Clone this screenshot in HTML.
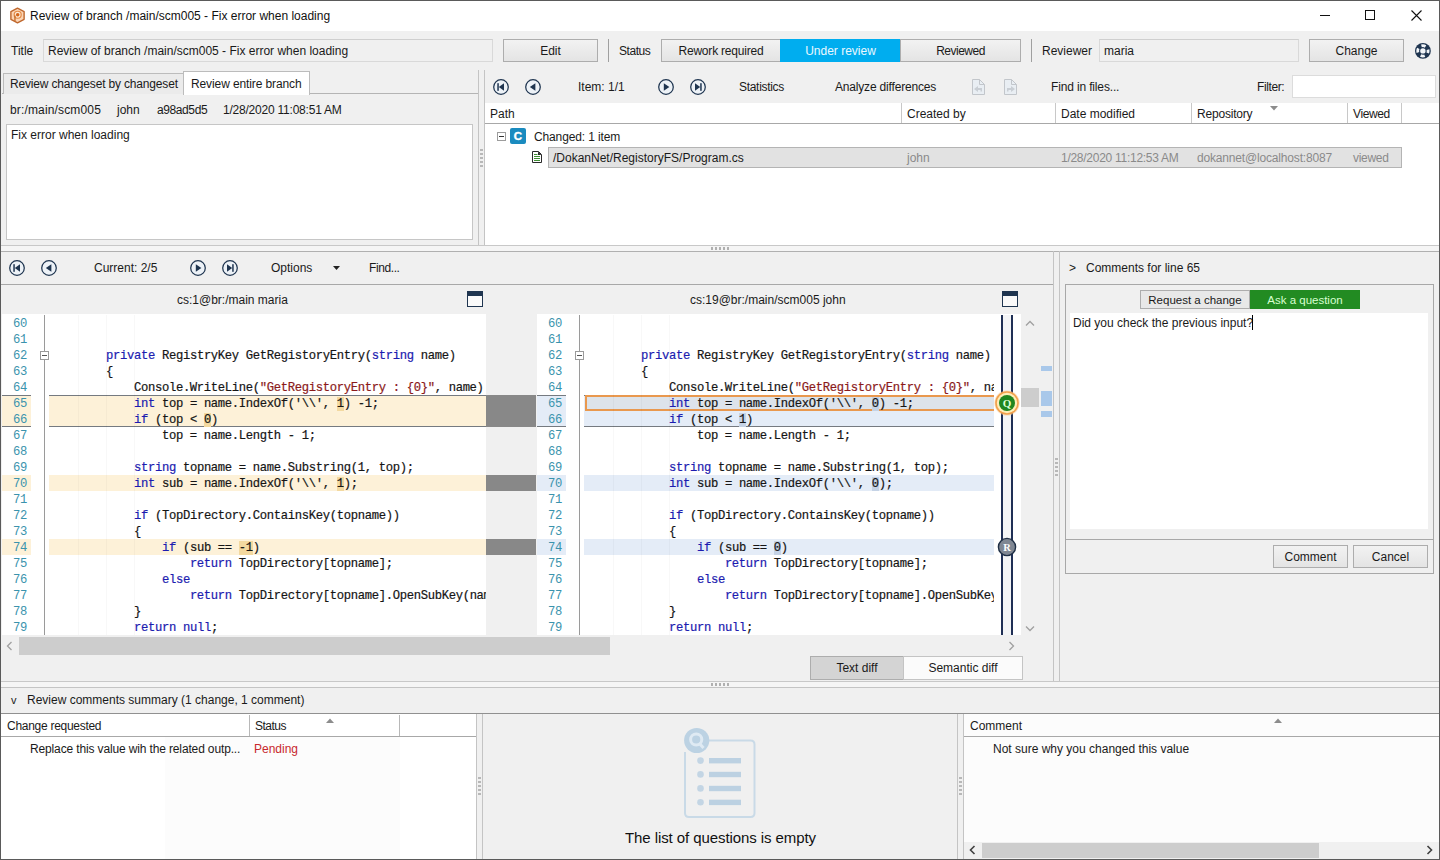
<!DOCTYPE html>
<html><head><meta charset="utf-8"><title>Review of branch /main/scm005 - Fix error when loading</title>
<style>
*{box-sizing:border-box;margin:0;padding:0}
html,body{width:1440px;height:860px;overflow:hidden;background:#f0f0f0}
body{font-family:"Liberation Sans",sans-serif;font-size:12px;color:#1a1a1a;position:relative}
.a{position:absolute}
.t{position:absolute;white-space:pre;line-height:16px;height:16px}
.btn{position:absolute;border:1px solid #adadad;background:linear-gradient(#f2f2f2,#e4e4e4);text-align:center;line-height:23px;white-space:pre}
.fld{position:absolute;border:1px solid #d9d9d9;border-top-color:#cfcfcf;background:#f0f0f0;line-height:22px;padding-left:4px;white-space:pre}
.hl{position:absolute;background:#a0a0a0;height:1px}
.vl{position:absolute;background:#a0a0a0;width:1px}
.mono{font-family:"Liberation Mono",monospace;font-size:11.67px}
.code{position:absolute;white-space:pre;font-family:"Liberation Mono",monospace;font-size:12.2px;letter-spacing:-0.32px;line-height:16px;margin-top:1px;color:#151515;-webkit-text-stroke:0.2px}
.h{background:#f3d9a0}#paner .h{background:#c5d3e6}.k{color:#1c1cb0}.s{color:#8b1a1a}
.ln{position:absolute;white-space:pre;font-family:"Liberation Mono",monospace;font-size:12.2px;letter-spacing:-0.32px;line-height:16px;margin-top:1px;margin-left:-1px;color:#3a93ad;text-align:right;width:26px}
</style></head><body>
<!-- title bar -->
<div class="a" style="left:0;top:0;width:1440px;height:31px;background:#fff"></div>
<div class="t" style="left:30px;top:8px;color:#111">Review of branch /main/scm005 - Fix error when loading</div>

<!-- app icon -->
<svg class="a" style="left:8.5px;top:6.5px" width="17" height="17" viewBox="0 0 18 18"><path d="M9 1.2 L16 5 V13 L9 16.8 L2 13 V5 Z" fill="#fbd5b5" stroke="#bf682e" stroke-width="1.5" stroke-linejoin="round"/><circle cx="9.2" cy="8.2" r="3.7" fill="#fdebd8" stroke="#e58a45" stroke-width="1.3"/><circle cx="9.2" cy="8.2" r="1.9" fill="#d4661a"/><path d="M6.3 9V15" stroke="#c8702f" stroke-width="1.5"/></svg>
<!-- window controls -->
<div class="a" style="left:1320px;top:15px;width:10px;height:1px;background:#111"></div>
<div class="a" style="left:1365px;top:10px;width:10px;height:10px;border:1px solid #111"></div>
<svg class="a" style="left:1411px;top:10px" width="11" height="11" viewBox="0 0 11 11"><path d="M0.5 0.5L10.5 10.5M10.5 0.5L0.5 10.5" stroke="#111" stroke-width="1.1" fill="none"/></svg>
<!-- top toolbar -->
<div class="t" style="left:11px;top:43px">Title</div>
<div class="fld" style="left:43px;top:39px;width:450px;height:23px">Review of branch /main/scm005 - Fix error when loading</div>
<div class="btn" style="left:503px;top:39px;width:95px;height:23px">Edit</div>
<div class="vl" style="left:608px;top:39px;height:23px"></div>
<div class="t" style="letter-spacing:-0.45px;left:619px;top:43px">Status</div>
<div class="btn" style="letter-spacing:-0.2px;left:661px;top:39px;width:120px;height:23px">Rework required</div>
<div class="btn" style="left:780px;top:39px;width:121px;height:23px;background:#00adef;border-color:#00adef;color:#eaf8ff">Under review</div>
<div class="btn" style="letter-spacing:-0.5px;left:900px;top:39px;width:121px;height:23px">Reviewed</div>
<div class="vl" style="left:1031px;top:39px;height:23px"></div>
<div class="t" style="left:1042px;top:43px">Reviewer</div>
<div class="fld" style="left:1099px;top:39px;width:200px;height:23px">maria</div>
<div class="btn" style="left:1309px;top:39px;width:95px;height:23px">Change</div>
<svg class="a" style="left:1414px;top:42px" width="18" height="18" viewBox="0 0 18 18"><circle cx="8.9" cy="8.9" r="7.9" fill="#1f3550"/><circle cx="8.9" cy="8.9" r="2.7" fill="#f2f5f9"/><circle cx="8.9" cy="8.9" r="5.2" fill="none" stroke="#f2f5f9" stroke-width="2.8" stroke-dasharray="4.3 3.868" stroke-dashoffset="2.15"/></svg>

<!-- left tabs -->
<div class="hl" style="left:2px;top:93px;width:476px;background:#b4b4b4"></div>
<div class="a" style="left:3px;top:73px;width:181px;height:21px;border:1px solid #bcbcbc;border-bottom:0;background:#ebebeb"></div>
<div class="t" style="letter-spacing:-0.17px;left:10px;top:76px">Review changeset by changeset</div>
<div class="a" style="left:183px;top:71px;width:127px;height:24px;border:1px solid #bcbcbc;border-bottom:0;background:#fff"></div>
<div class="t" style="letter-spacing:-0.11px;left:191px;top:76px">Review entire branch</div>
<div class="t" style="letter-spacing:0.15px;left:10px;top:102px">br:/main/scm005</div>
<div class="t" style="left:117px;top:102px">john</div>
<div class="t" style="letter-spacing:-0.4px;left:157px;top:102px">a98ad5d5</div>
<div class="t" style="letter-spacing:-0.22px;left:223px;top:102px">1/28/2020 11:08:51 AM</div>
<div class="a" style="left:6px;top:124px;width:467px;height:116px;border:1px solid #c6c6c6;background:#fff"></div>
<div class="t" style="left:11px;top:127px">Fix error when loading</div>
<!-- v splitter top -->
<div class="vl" style="left:478px;top:70px;height:175px;background:#c4c4c4"></div>
<div class="a" style="left:480px;top:149px;width:3px;height:18px;background:repeating-linear-gradient(#b8b8b8 0 2px,transparent 2px 4px)"></div>
<!-- right top panel -->
<div class="a" style="left:484px;top:70px;width:1px;height:175px;background:#c4c4c4"></div>
<div class="a" style="left:485px;top:103px;width:954px;height:142px;background:#fff"></div>
<svg class="a" style="left:492px;top:78px" width="216" height="18" viewBox="0 0 216 18" fill="none" stroke="#1f3550">
<g id="nfirst"><circle cx="9" cy="9" r="7.3" stroke-width="1.25" fill="#edf2f7"/><path d="M12 5.2V12.8L6.8 9Z" fill="#1f3550" stroke="none"/><rect x="5.3" y="5.2" width="1.5" height="7.6" fill="#1f3550" stroke="none"/></g>
<g transform="translate(32 0)"><circle cx="9" cy="9" r="7.3" stroke-width="1.25" fill="#edf2f7"/><path d="M11.4 5.2V12.8L5.8 9Z" fill="#1f3550" stroke="none"/></g>
<g transform="translate(165 0)"><circle cx="9" cy="9" r="7.3" stroke-width="1.25" fill="#edf2f7"/><path d="M6.8 5.2V12.8L12.4 9Z" fill="#1f3550" stroke="none"/></g>
<g transform="translate(197 0)"><circle cx="9" cy="9" r="7.3" stroke-width="1.25" fill="#edf2f7"/><path d="M6 5.2V12.8L11.2 9Z" fill="#1f3550" stroke="none"/><rect x="11.2" y="5.2" width="1.5" height="7.6" fill="#1f3550" stroke="none"/></g>
</svg>
<div class="t" style="left:578px;top:79px">Item: 1/1</div>
<div class="t" style="letter-spacing:-0.3px;left:739px;top:79px">Statistics</div>
<div class="t" style="letter-spacing:-0.18px;left:835px;top:79px">Analyze differences</div>
<svg class="a" style="left:969px;top:78px" width="52" height="18" viewBox="0 0 52 18" fill="#e9eef3" stroke="#c2c6cb" stroke-width="1"><path d="M3.5 1.5H10.5L15.5 6.5V16.5H3.5Z"/><path d="M10.5 1.5V6.5H15.5" fill="none"/><path d="M5 11L9 8V10H13V13.5H11.5V12H9V14Z" fill="#c9ced4" stroke="none"/>
<g transform="translate(32 0)"><path d="M3.5 1.5H10.5L15.5 6.5V16.5H3.5Z"/><path d="M10.5 1.5V6.5H15.5" fill="none"/><path d="M14 11L10 8V10H6V13.5H7.5V12H10V14Z" fill="#c9ced4" stroke="none"/></g></svg>
<div class="t" style="letter-spacing:-0.15px;left:1051px;top:79px">Find in files...</div>
<div class="t" style="letter-spacing:-0.4px;left:1257px;top:79px">Filter:</div>
<div class="a" style="left:1292px;top:75px;width:144px;height:23px;border:1px solid #dcdcdc;background:#fff"></div>
<!-- header -->
<div class="hl" style="left:485px;top:123px;width:954px;background:#a8a8a8"></div>
<div class="t" style="left:490px;top:106px">Path</div>
<div class="vl" style="left:901px;top:103px;height:20px;background:#c8c8c8"></div>
<div class="t" style="left:907px;top:106px">Created by</div>
<div class="vl" style="left:1055px;top:103px;height:20px;background:#c8c8c8"></div>
<div class="t" style="left:1061px;top:106px">Date modified</div>
<div class="vl" style="left:1191px;top:103px;height:20px;background:#c8c8c8"></div>
<div class="t" style="letter-spacing:-0.2px;left:1197px;top:106px">Repository</div>
<svg class="a" style="left:1270px;top:106px" width="8" height="5"><path d="M0 0H8L4 4.5Z" fill="#8c8c8c"/></svg>
<div class="vl" style="left:1347px;top:103px;height:20px;background:#c8c8c8"></div>
<div class="t" style="letter-spacing:-0.4px;left:1353px;top:106px">Viewed</div>
<div class="vl" style="left:1401px;top:103px;height:20px;background:#c8c8c8"></div>
<!-- tree -->
<div class="a" style="left:497px;top:132px;width:9px;height:9px;border:1px solid #9c9c9c;background:#fff"></div>
<div class="a" style="left:499px;top:136px;width:5px;height:1px;background:#333"></div>
<div class="a" style="left:510px;top:128px;width:16px;height:16px;border-radius:2px;background:#1a8bbf;color:#fff;font-weight:bold;font-size:11.5px;line-height:16px;text-align:center;-webkit-text-stroke:0.4px #fff">C</div>
<div class="t" style="letter-spacing:-0.13px;left:534px;top:129px">Changed: 1 item</div>
<svg class="a" style="left:532px;top:151px" width="10" height="12" viewBox="0 0 10 12"><path d="M0.5 0.5H6.5L9.5 3.5V11.5H0.5Z" fill="#fff" stroke="#2a2a2a" stroke-width="1"/><path d="M6 0.5L9.5 4H6Z" fill="#2a2a2a"/><path d="M2 3.5H5.5M2 5.5H8M2 7.5H8M2 9.5H8" stroke="#3f8f35" stroke-width="1"/></svg>
<div class="a" style="left:548px;top:147px;width:854px;height:21px;border:1px solid #b4b4b4;background:#e2e2e2"></div>
<div class="t" style="left:553px;top:150px">/DokanNet/RegistoryFS/Program.cs</div>
<div class="t" style="left:907px;top:150px;color:#8a8a8a">john</div>
<div class="t" style="letter-spacing:-0.27px;left:1061px;top:150px;color:#8a8a8a">1/28/2020 11:12:53 AM</div>
<div class="t" style="letter-spacing:-0.17px;left:1197px;top:150px;color:#8a8a8a">dokannet@localhost:8087</div>
<div class="t" style="letter-spacing:-0.3px;left:1353px;top:150px;color:#8a8a8a">viewed</div>
<!-- h splitter 1 -->
<div class="hl" style="left:1px;top:245px;width:1438px;background:#c8c8c8"></div>

<div class="a" style="left:1px;top:246px;width:1438px;height:5px;background:#f5f5f5"></div><div class="hl" style="left:1px;top:251px;width:1438px;background:#b0b0b0"></div><div class="a" style="left:711px;top:247px;width:18px;height:3px;background:repeating-linear-gradient(90deg,#b0b0b0 0 2px,transparent 2px 4px)"></div>
<!-- diff toolbar -->
<svg class="a" style="left:8px;top:259px" width="232" height="18" viewBox="0 0 232 18" fill="none" stroke="#1f3550">
<g><circle cx="9" cy="9" r="7.3" stroke-width="1.25" fill="#edf2f7"/><path d="M12 5.2V12.8L6.8 9Z" fill="#1f3550" stroke="none"/><rect x="5.3" y="5.2" width="1.5" height="7.6" fill="#1f3550" stroke="none"/></g>
<g transform="translate(32 0)"><circle cx="9" cy="9" r="7.3" stroke-width="1.25" fill="#edf2f7"/><path d="M11.4 5.2V12.8L5.8 9Z" fill="#1f3550" stroke="none"/></g>
<g transform="translate(181 0)"><circle cx="9" cy="9" r="7.3" stroke-width="1.25" fill="#edf2f7"/><path d="M6.8 5.2V12.8L12.4 9Z" fill="#1f3550" stroke="none"/></g>
<g transform="translate(213 0)"><circle cx="9" cy="9" r="7.3" stroke-width="1.25" fill="#edf2f7"/><path d="M6 5.2V12.8L11.2 9Z" fill="#1f3550" stroke="none"/><rect x="11.2" y="5.2" width="1.5" height="7.6" fill="#1f3550" stroke="none"/></g>
</svg>
<div class="t" style="left:94px;top:260px">Current: 2/5</div>
<div class="t" style="left:271px;top:260px">Options</div>
<svg class="a" style="left:332.5px;top:265.5px" width="7" height="4"><path d="M0 0H7L3.5 4Z" fill="#222"/></svg>
<div class="t" style="letter-spacing:-0.4px;left:369px;top:260px">Find...</div>
<div class="hl" style="left:1px;top:284px;width:1052px;background:#a8a8a8"></div>
<div class="t" style="left:177px;top:292px">cs:1@br:/main maria</div>
<div class="t" style="left:690px;top:292px">cs:19@br:/main/scm005 john</div>
<div class="a" style="left:467px;top:291px;width:16px;height:16px;border:1px solid #1f3550;border-top:5px solid #1f3550;background:#fafafa"></div>
<div class="a" style="left:1002px;top:291px;width:16px;height:16px;border:1px solid #1f3550;border-top:5px solid #1f3550;background:#fafafa"></div>
<div class="a" id="panel" style="left:2px;top:315px;width:484px;height:320px;background:#fff;overflow:hidden">
<div class="a" style="left:0;top:80px;width:29px;height:32px;background:#fdf1d8"></div>
<div class="a" style="left:47px;top:80px;width:437px;height:32px;background:#fdf1d8"></div>
<div class="a" style="left:0;top:80px;width:29px;height:1px;background:#757a80"></div>
<div class="a" style="left:47px;top:80px;width:437px;height:1px;background:#757a80"></div>
<div class="a" style="left:0;top:111px;width:29px;height:1px;background:#757a80"></div>
<div class="a" style="left:47px;top:111px;width:437px;height:1px;background:#757a80"></div>
<div class="a" style="left:0;top:160px;width:29px;height:16px;background:#fdf1d8"></div>
<div class="a" style="left:47px;top:160px;width:437px;height:16px;background:#fdf1d8"></div>
<div class="a" style="left:0;top:224px;width:29px;height:16px;background:#fdf1d8"></div>
<div class="a" style="left:47px;top:224px;width:437px;height:16px;background:#fdf1d8"></div>
<div class="a" style="left:76px;top:0;width:1px;height:320px;background:rgba(0,0,0,0.028)"></div>
<div class="a" style="left:104px;top:0;width:1px;height:320px;background:rgba(0,0,0,0.028)"></div>
<div class="a" style="left:132px;top:0;width:1px;height:320px;background:rgba(0,0,0,0.028)"></div>
<div class="a" style="left:42px;top:0;width:1px;height:320px;background:#9a9a9a"></div>
<div class="a" style="left:38px;top:36px;width:9px;height:9px;border:1px solid #9a9a9a;background:#fff"></div><div class="a" style="left:40px;top:40px;width:5px;height:1px;background:#555"></div>
<div class="ln" style="left:0;top:0px">60</div>
<div class="ln" style="left:0;top:16px">61</div>
<div class="ln" style="left:0;top:32px">62</div>
<div class="code" style="left:48px;top:32px">        <span class="k">private</span> RegistryKey GetRegistoryEntry(<span class="k">string</span> name)</div>
<div class="ln" style="left:0;top:48px">63</div>
<div class="code" style="left:48px;top:48px">        {</div>
<div class="ln" style="left:0;top:64px">64</div>
<div class="code" style="left:48px;top:64px">            Console.WriteLine(<span class="s">"GetRegistoryEntry : {0}"</span>, name)</div>
<div class="ln" style="left:0;top:80px">65</div>
<div class="code" style="left:48px;top:80px">            <span class="k">int</span> top = name.IndexOf('\\', <span class="h">1</span>) -1;</div>
<div class="ln" style="left:0;top:96px">66</div>
<div class="code" style="left:48px;top:96px">            <span class="k">if</span> (top &lt; <span class="h">0</span>)</div>
<div class="ln" style="left:0;top:112px">67</div>
<div class="code" style="left:48px;top:112px">                top = name.Length - 1;</div>
<div class="ln" style="left:0;top:128px">68</div>
<div class="ln" style="left:0;top:144px">69</div>
<div class="code" style="left:48px;top:144px">            <span class="k">string</span> topname = name.Substring(1, top);</div>
<div class="ln" style="left:0;top:160px">70</div>
<div class="code" style="left:48px;top:160px">            <span class="k">int</span> sub = name.IndexOf('\\', <span class="h">1</span>);</div>
<div class="ln" style="left:0;top:176px">71</div>
<div class="ln" style="left:0;top:192px">72</div>
<div class="code" style="left:48px;top:192px">            <span class="k">if</span> (TopDirectory.ContainsKey(topname))</div>
<div class="ln" style="left:0;top:208px">73</div>
<div class="code" style="left:48px;top:208px">            {</div>
<div class="ln" style="left:0;top:224px">74</div>
<div class="code" style="left:48px;top:224px">                <span class="k">if</span> (sub == <span class="h">-1</span>)</div>
<div class="ln" style="left:0;top:240px">75</div>
<div class="code" style="left:48px;top:240px">                    <span class="k">return</span> TopDirectory[topname];</div>
<div class="ln" style="left:0;top:256px">76</div>
<div class="code" style="left:48px;top:256px">                <span class="k">else</span></div>
<div class="ln" style="left:0;top:272px">77</div>
<div class="code" style="left:48px;top:272px">                    <span class="k">return</span> TopDirectory[topname].OpenSubKey(name.Substring(sub + 1));</div>
<div class="ln" style="left:0;top:288px">78</div>
<div class="code" style="left:48px;top:288px">            }</div>
<div class="ln" style="left:0;top:304px">79</div>
<div class="code" style="left:48px;top:304px">            <span class="k">return</span> <span class="k">null</span>;</div>
</div>
<div class="a" style="left:486px;top:395px;width:50px;height:32px;background:#888"></div>
<div class="a" style="left:486px;top:475px;width:50px;height:16px;background:#888"></div>
<div class="a" style="left:486px;top:539px;width:50px;height:16px;background:#888"></div>
<div class="a" id="paner" style="left:537px;top:315px;width:457px;height:320px;background:#fff;overflow:hidden">
<div class="a" style="left:0;top:80px;width:29px;height:32px;background:#e4ecf7"></div>
<div class="a" style="left:47px;top:80px;width:410px;height:32px;background:#e4ecf7"></div>
<div class="a" style="left:0;top:80px;width:29px;height:1px;background:#757a80"></div>
<div class="a" style="left:47px;top:80px;width:410px;height:1px;background:#757a80"></div>
<div class="a" style="left:0;top:111px;width:29px;height:1px;background:#757a80"></div>
<div class="a" style="left:47px;top:111px;width:410px;height:1px;background:#757a80"></div>
<div class="a" style="left:0;top:160px;width:29px;height:16px;background:#e4ecf7"></div>
<div class="a" style="left:47px;top:160px;width:410px;height:16px;background:#e4ecf7"></div>
<div class="a" style="left:0;top:224px;width:29px;height:16px;background:#e4ecf7"></div>
<div class="a" style="left:47px;top:224px;width:410px;height:16px;background:#e4ecf7"></div>
<div class="a" style="left:48px;top:80px;width:409px;height:16px;background:#dde3ea;border:2px solid #e9984e;border-right:0"></div>
<div class="a" style="left:76px;top:0;width:1px;height:320px;background:rgba(0,0,0,0.028)"></div>
<div class="a" style="left:104px;top:0;width:1px;height:320px;background:rgba(0,0,0,0.028)"></div>
<div class="a" style="left:132px;top:0;width:1px;height:320px;background:rgba(0,0,0,0.028)"></div>
<div class="a" style="left:42px;top:0;width:1px;height:320px;background:#9a9a9a"></div>
<div class="a" style="left:38px;top:36px;width:9px;height:9px;border:1px solid #9a9a9a;background:#fff"></div><div class="a" style="left:40px;top:40px;width:5px;height:1px;background:#555"></div>
<div class="ln" style="left:0;top:0px">60</div>
<div class="ln" style="left:0;top:16px">61</div>
<div class="ln" style="left:0;top:32px">62</div>
<div class="code" style="left:48px;top:32px">        <span class="k">private</span> RegistryKey GetRegistoryEntry(<span class="k">string</span> name)</div>
<div class="ln" style="left:0;top:48px">63</div>
<div class="code" style="left:48px;top:48px">        {</div>
<div class="ln" style="left:0;top:64px">64</div>
<div class="code" style="left:48px;top:64px">            Console.WriteLine(<span class="s">"GetRegistoryEntry : {0}"</span>, name)</div>
<div class="ln" style="left:0;top:80px">65</div>
<div class="code" style="left:48px;top:80px">            <span class="k">int</span> top = name.IndexOf('\\', <span class="h">0</span>) -1;</div>
<div class="ln" style="left:0;top:96px">66</div>
<div class="code" style="left:48px;top:96px">            <span class="k">if</span> (top &lt; <span class="h">1</span>)</div>
<div class="ln" style="left:0;top:112px">67</div>
<div class="code" style="left:48px;top:112px">                top = name.Length - 1;</div>
<div class="ln" style="left:0;top:128px">68</div>
<div class="ln" style="left:0;top:144px">69</div>
<div class="code" style="left:48px;top:144px">            <span class="k">string</span> topname = name.Substring(1, top);</div>
<div class="ln" style="left:0;top:160px">70</div>
<div class="code" style="left:48px;top:160px">            <span class="k">int</span> sub = name.IndexOf('\\', <span class="h">0</span>);</div>
<div class="ln" style="left:0;top:176px">71</div>
<div class="ln" style="left:0;top:192px">72</div>
<div class="code" style="left:48px;top:192px">            <span class="k">if</span> (TopDirectory.ContainsKey(topname))</div>
<div class="ln" style="left:0;top:208px">73</div>
<div class="code" style="left:48px;top:208px">            {</div>
<div class="ln" style="left:0;top:224px">74</div>
<div class="code" style="left:48px;top:224px">                <span class="k">if</span> (sub == <span class="h">0</span>)</div>
<div class="ln" style="left:0;top:240px">75</div>
<div class="code" style="left:48px;top:240px">                    <span class="k">return</span> TopDirectory[topname];</div>
<div class="ln" style="left:0;top:256px">76</div>
<div class="code" style="left:48px;top:256px">                <span class="k">else</span></div>
<div class="ln" style="left:0;top:272px">77</div>
<div class="code" style="left:48px;top:272px">                    <span class="k">return</span> TopDirectory[topname].OpenSubKey(name.Substring(sub + 1));</div>
<div class="ln" style="left:0;top:288px">78</div>
<div class="code" style="left:48px;top:288px">            }</div>
<div class="ln" style="left:0;top:304px">79</div>
<div class="code" style="left:48px;top:304px">            <span class="k">return</span> <span class="k">null</span>;</div>
</div>
<div class="a" style="left:2px;top:314px;width:484px;height:1px;background:#fff"></div><div class="a" style="left:537px;top:314px;width:484px;height:1px;background:#fff"></div>
<!-- right gutter of diff -->
<div class="a" style="left:994px;top:315px;width:27px;height:320px;background:#fff"></div>
<div class="a" style="left:1001px;top:315px;width:12px;height:320px;background:#f3f4f6;border-left:2px solid #1f2f55;border-right:2px solid #1f2f55"></div>
<svg class="a" style="left:993px;top:389px" width="28" height="28" viewBox="0 0 28 28"><circle cx="14" cy="14" r="12.6" fill="#f6c48a" opacity="0.55"/><circle cx="14" cy="14" r="11.8" fill="#f2a04c"/><circle cx="14" cy="14" r="10.2" fill="#fdeeb8"/><circle cx="14" cy="14" r="8" fill="#1f861f"/><text x="14" y="18" text-anchor="middle" font-family="Liberation Serif,serif" font-weight="bold" font-size="11" fill="#dfffd8">Q</text></svg>
<svg class="a" style="left:997px;top:537px" width="20" height="20" viewBox="0 0 20 20"><circle cx="10" cy="10" r="8.6" fill="#7f8793" stroke="#1f2f45" stroke-width="1.4"/><text x="10" y="13.8" text-anchor="middle" font-family="Liberation Serif,serif" font-weight="bold" font-size="10.5" fill="#fff">R</text></svg>
<!-- v scrollbar -->
<svg class="a" style="left:1025px;top:320px" width="10" height="7"><path d="M1 5.5L5 1.5L9 5.5" fill="none" stroke="#a0a0a0" stroke-width="1.3"/></svg>
<svg class="a" style="left:1025px;top:625px" width="10" height="7"><path d="M1 1.5L5 5.5L9 1.5" fill="none" stroke="#a0a0a0" stroke-width="1.3"/></svg>
<div class="a" style="left:1021px;top:388px;width:18px;height:19px;background:#cdcdcd"></div>
<div class="a" style="left:1041px;top:366px;width:11px;height:5px;background:#a9c8ea"></div>
<div class="a" style="left:1041px;top:391px;width:11px;height:15px;background:#a9c8ea"></div>
<div class="a" style="left:1041px;top:411px;width:11px;height:6px;background:#a9c8ea"></div>
<!-- h scrollbar -->
<svg class="a" style="left:6px;top:641px" width="7" height="10"><path d="M5.5 1L1.5 5L5.5 9" fill="none" stroke="#a0a0a0" stroke-width="1.3"/></svg>
<svg class="a" style="left:1008px;top:641px" width="7" height="10"><path d="M1.5 1L5.5 5L1.5 9" fill="none" stroke="#a0a0a0" stroke-width="1.3"/></svg>
<div class="a" style="left:19px;top:637px;width:591px;height:18px;background:#cdcdcd"></div>
<div class="btn" style="left:810px;top:656px;width:94px;height:24px;background:#d4d4d4;line-height:22px">Text diff</div>
<div class="btn" style="left:903px;top:656px;width:120px;height:24px;background:#fbfbfb;border-color:#c4c4c4;line-height:22px">Semantic diff</div>
<!-- v splitter diff/comments -->
<div class="vl" style="left:1053px;top:251px;height:431px;background:#c4c4c4"></div>
<div class="vl" style="left:1059px;top:251px;height:431px;background:#c4c4c4"></div>
<div class="a" style="left:1055px;top:458px;width:3px;height:18px;background:repeating-linear-gradient(#b8b8b8 0 2px,transparent 2px 4px)"></div>
<!-- comments panel -->
<div class="t" style="left:1069px;top:260px">&gt;</div>
<div class="t" style="left:1086px;top:260px">Comments for line 65</div>
<div class="a" style="left:1065px;top:284px;width:369px;height:290px;border:1px solid #a8a8a8"></div>
<div class="btn" style="left:1140px;top:290px;width:110px;height:19px;line-height:18px;font-size:11.5px;background:#e8e8e8">Request a change</div>
<div class="btn" style="left:1250px;top:290px;width:110px;height:19px;line-height:18px;font-size:11.5px;background:#228b22;border-color:#228b22;color:#d8ffd0">Ask a question</div>
<div class="a" style="left:1070px;top:313px;width:358px;height:216px;background:#fff"></div>
<div class="t" style="left:1073px;top:315px">Did you check the previous input?</div>
<div class="a" style="left:1252px;top:315px;width:1px;height:15px;background:#000"></div>
<div class="hl" style="left:1066px;top:539px;width:367px;background:#a8a8a8"></div>
<div class="btn" style="left:1273px;top:545px;width:75px;height:23px">Comment</div>
<div class="btn" style="left:1353px;top:545px;width:75px;height:23px">Cancel</div>
<!-- h splitter 2 -->
<div class="hl" style="left:1px;top:681px;width:1438px;background:#c8c8c8"></div>
<div class="a" style="left:1px;top:682px;width:1438px;height:5px;background:#f5f5f5"></div><div class="a" style="left:711px;top:683px;width:18px;height:3px;background:repeating-linear-gradient(90deg,#b0b0b0 0 2px,transparent 2px 4px)"></div>
<div class="hl" style="left:1px;top:687px;width:1438px;background:#c4c4c4"></div>

<!-- bottom -->
<div class="t" style="left:11px;top:692px;font-size:11px">v</div>
<div class="t" style="left:27px;top:692px">Review comments summary (1 change, 1 comment)</div>
<div class="hl" style="left:1px;top:713px;width:1438px;background:#909090"></div>
<div class="a" style="left:1px;top:714px;width:475px;height:145px;background:#fff"></div>
<div class="a" style="left:165px;top:737px;width:235px;height:122px;background:#fcfcfc"></div>
<div class="t" style="letter-spacing:-0.28px;left:7px;top:718px">Change requested</div>
<div class="vl" style="left:249px;top:715px;height:21px;background:#b8b8b8"></div>
<div class="t" style="letter-spacing:-0.5px;left:255px;top:718px">Status</div>
<svg class="a" style="left:326px;top:718px" width="8" height="5"><path d="M0 5H8L4 0.5Z" fill="#8c8c8c"/></svg>
<div class="vl" style="left:399px;top:715px;height:21px;background:#b8b8b8"></div>
<div class="hl" style="left:1px;top:736px;width:475px;background:#a8a8a8"></div>
<div class="t" style="letter-spacing:-0.14px;left:30px;top:741px">Replace this value wih the related outp...</div>
<div class="t" style="left:254px;top:741px;color:#c8282d">Pending</div>
<div class="vl" style="left:476px;top:714px;height:145px;background:#c4c4c4"></div>
<div class="vl" style="left:482px;top:714px;height:145px;background:#c4c4c4"></div>
<div class="a" style="left:478px;top:777px;width:3px;height:18px;background:repeating-linear-gradient(#b8b8b8 0 2px,transparent 2px 4px)"></div>
<svg class="a" style="left:680px;top:724px" width="80" height="98" viewBox="0 0 80 98"><path d="M29 16.5H70.5Q74.5 16.5 74.5 20.5V89Q74.5 93 70.5 93H9Q5 93 5 89V28" fill="none" stroke="#c9dae7" stroke-width="2"/><circle cx="16.7" cy="16.5" r="12.6" fill="#bcd2e3"/><circle cx="16.2" cy="15.5" r="5.6" fill="none" stroke="#dfeaf3" stroke-width="3"/><path d="M19 19L23.5 24" stroke="#dfeaf3" stroke-width="3"/>
<g fill="#c3d5e4"><circle cx="20.5" cy="36.6" r="3.3"/><circle cx="20.5" cy="50.4" r="3.3"/><circle cx="20.5" cy="64.4" r="3.3"/><circle cx="20.5" cy="78.3" r="3.3"/></g>
<g fill="#bcd1e2"><rect x="29" y="34" width="32" height="5.4"/><rect x="29" y="47.8" width="32" height="5.4"/><rect x="29" y="61.8" width="32" height="5.4"/><rect x="29" y="75.7" width="32" height="5.4"/></g></svg>
<div class="t" style="left:625px;top:828px;letter-spacing:-0.08px;font-size:15px;line-height:20px;height:20px;color:#111">The list of questions is empty</div>
<div class="vl" style="left:957px;top:714px;height:145px;background:#c4c4c4"></div>
<div class="vl" style="left:963px;top:714px;height:145px;background:#c4c4c4"></div>
<div class="a" style="left:959px;top:777px;width:3px;height:18px;background:repeating-linear-gradient(#b8b8b8 0 2px,transparent 2px 4px)"></div>
<div class="a" style="left:964px;top:714px;width:475px;height:145px;background:#fcfcfc"></div>
<div class="t" style="left:970px;top:718px">Comment</div>
<svg class="a" style="left:1274px;top:718px" width="8" height="5"><path d="M0 5H8L4 0.5Z" fill="#8c8c8c"/></svg>
<div class="hl" style="left:964px;top:736px;width:475px;background:#a8a8a8"></div>
<div class="t" style="left:993px;top:741px">Not sure why you changed this value</div>
<div class="a" style="left:964px;top:842px;width:475px;height:17px;background:#f0f0f0"></div>
<div class="a" style="left:982px;top:843px;width:337px;height:15px;background:#cdcdcd"></div>
<svg class="a" style="left:969px;top:845px" width="7" height="10"><path d="M5.5 1L1.5 5L5.5 9" fill="none" stroke="#404040" stroke-width="1.6"/></svg>
<svg class="a" style="left:1426px;top:845px" width="7" height="10"><path d="M1.5 1L5.5 5L1.5 9" fill="none" stroke="#404040" stroke-width="1.6"/></svg>

<!-- window border -->
<div class="a" style="left:0;top:0;width:1440px;height:860px;border:1px solid #5a5a5a;pointer-events:none"></div>
</body></html>
